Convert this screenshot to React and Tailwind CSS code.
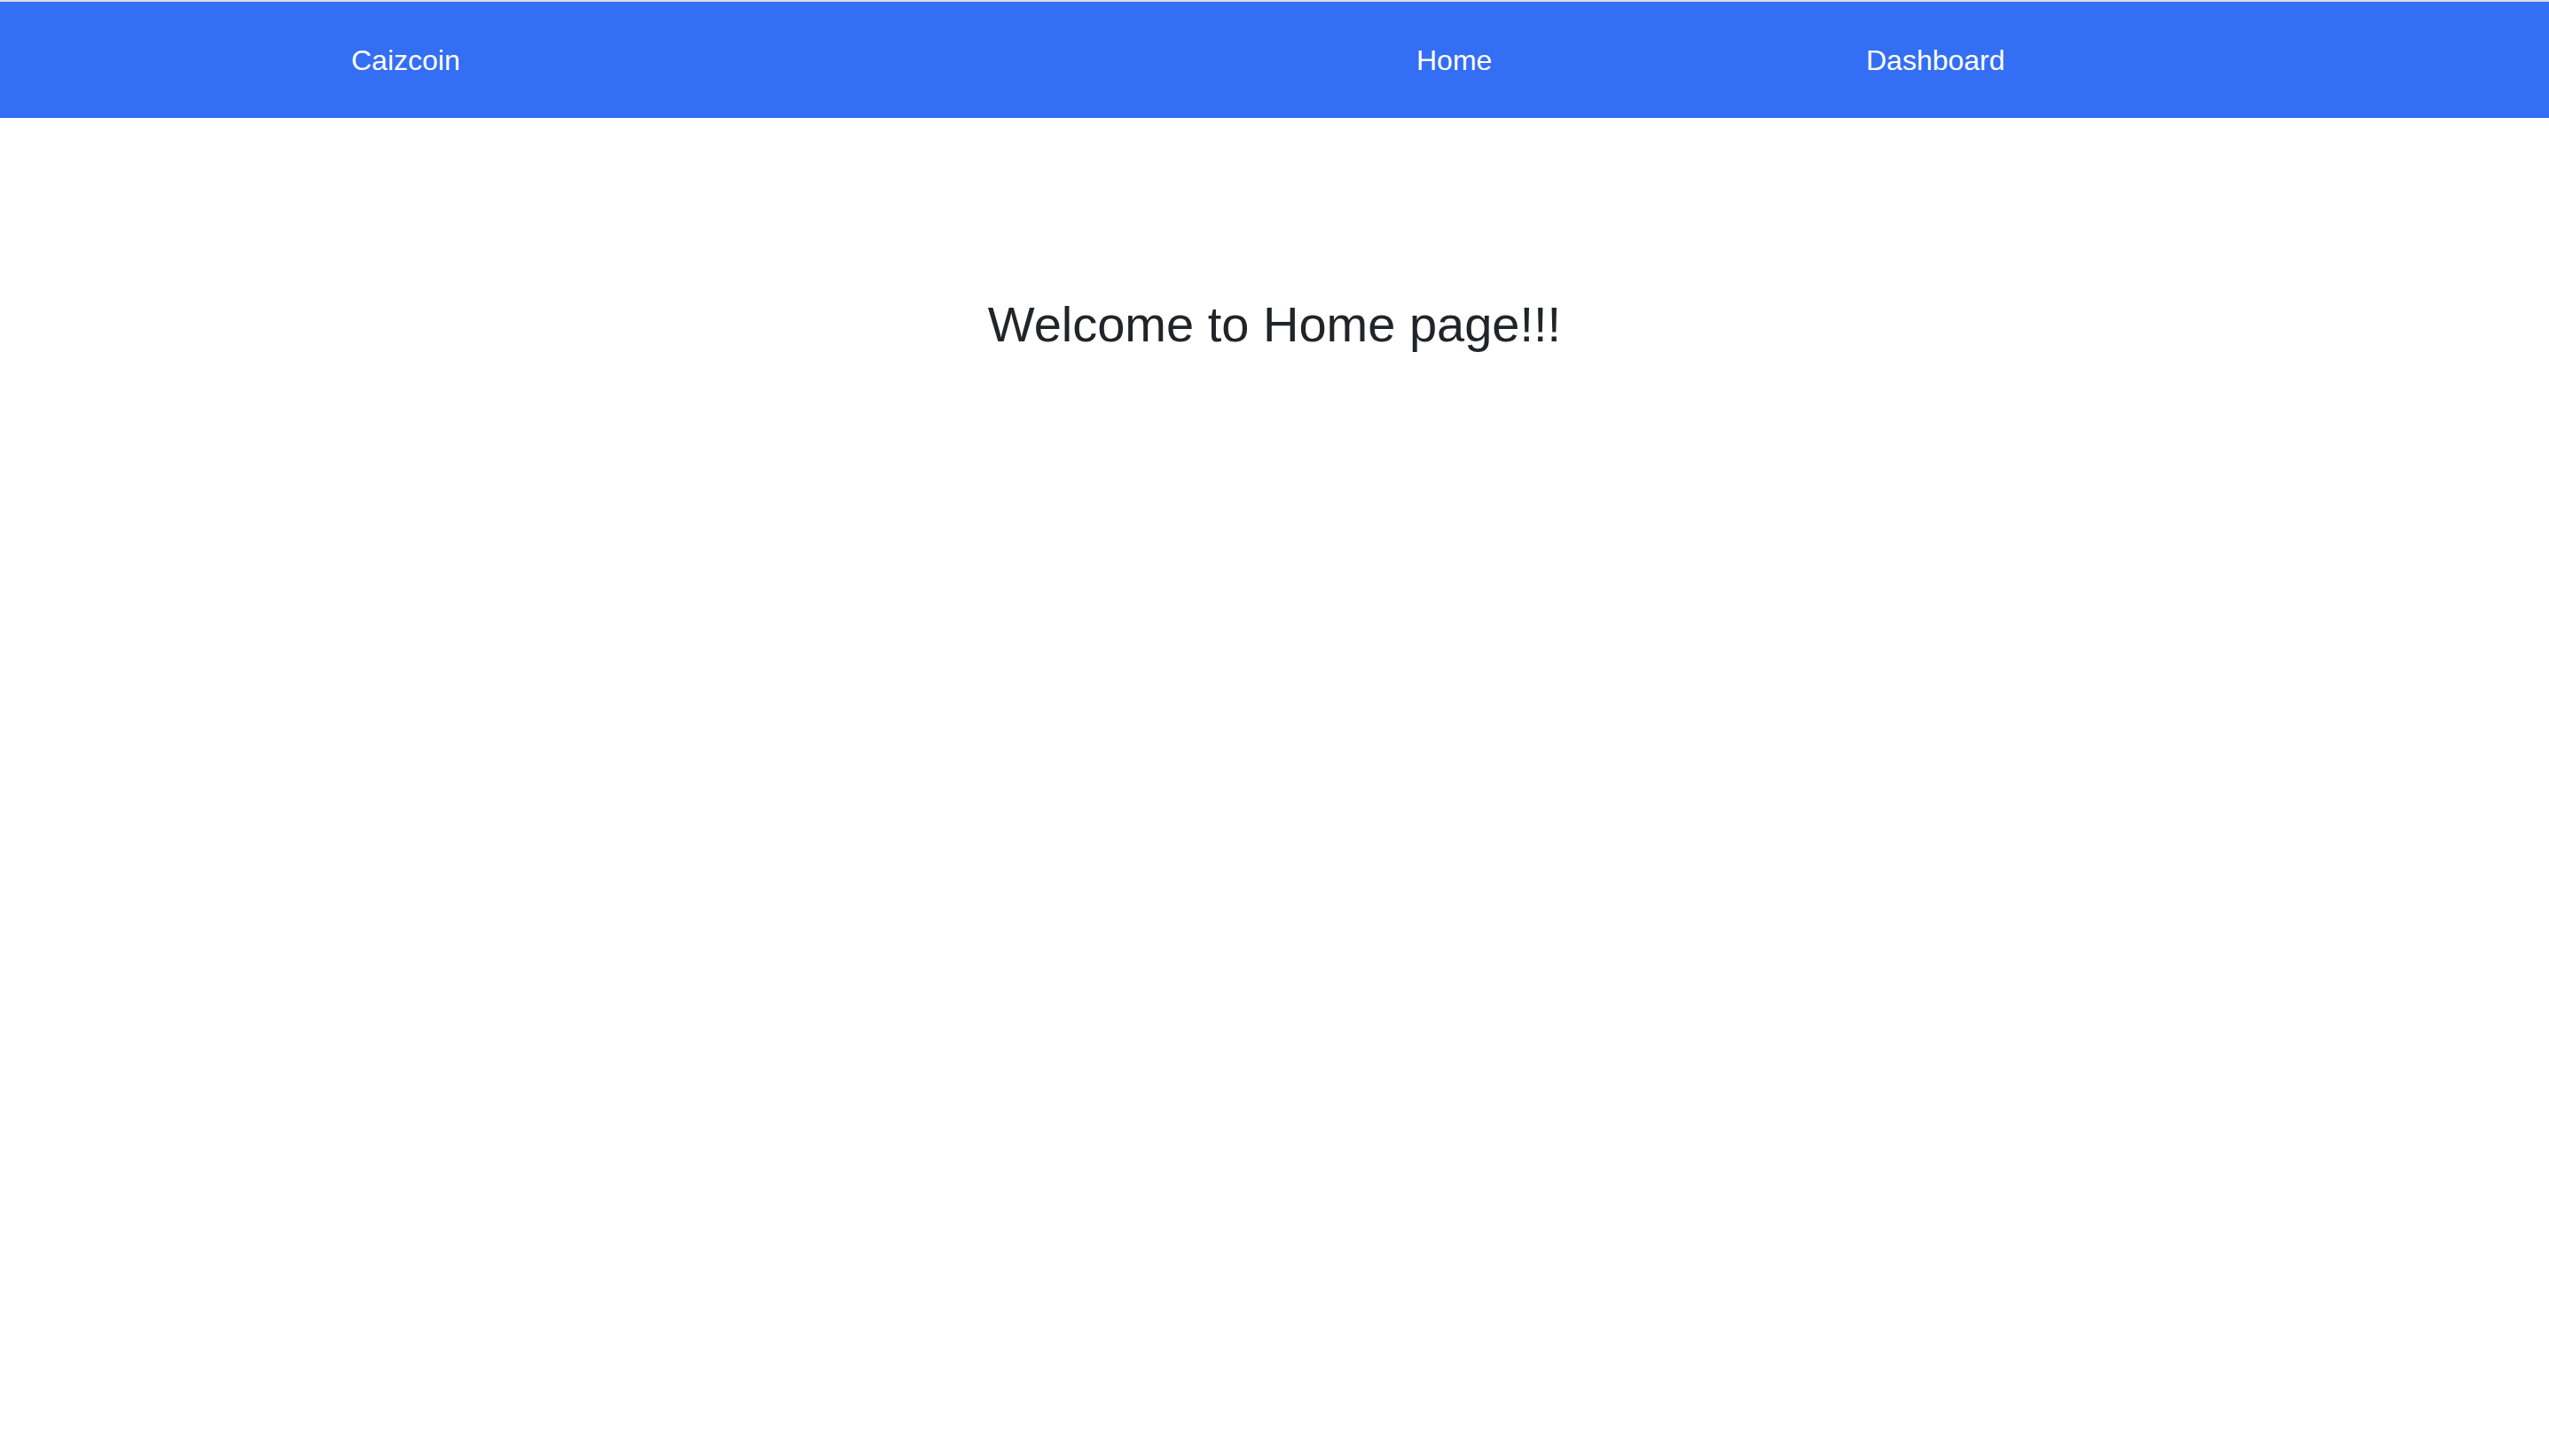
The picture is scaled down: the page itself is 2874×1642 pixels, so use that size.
export default function App() {
    const font = { fontFamily: '"Liberation Sans", Arial, sans-serif' };

    return (
        <div className="min-h-screen bg-white border-t-2 border-[#dedede]" style={font}>
            {/* Navbar */}
            <nav className="h-[131px] bg-[#336ef5] flex items-center pl-[396px] text-white text-[32px] leading-none">
                <a className="w-[1201px]">Caizcoin</a>
                <a className="w-[507px]">Home</a>
                <a>Dashboard</a>
            </nav>

            {/* Content */}
            <main className="mt-[205px] text-center">
                <h1 className="text-[56px] leading-none text-[#212529]">Welcome to Home page!!!</h1>
            </main>
        </div>
    );
}
